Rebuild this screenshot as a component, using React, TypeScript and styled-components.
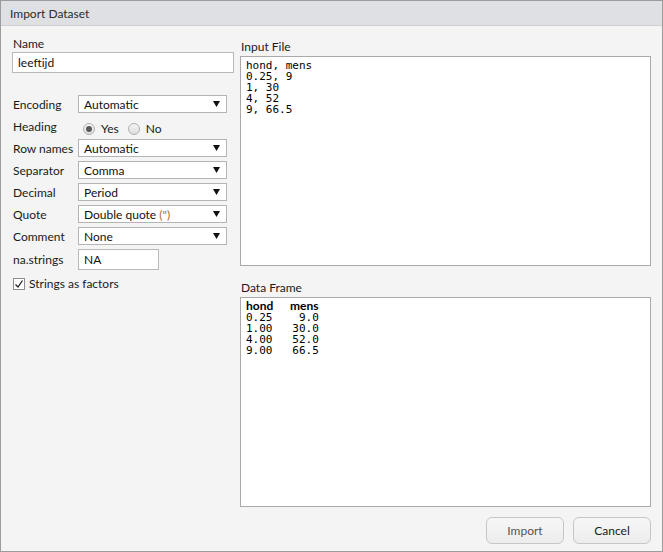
import * as React from "react";
import styled, { createGlobalStyle } from "styled-components";

const GlobalStyle = createGlobalStyle`
    html, body {
        margin: 0;
        padding: 0;
        background: #ffffff;
    }
    body {
        font-family: Lato, "Liberation Sans", sans-serif;
        font-size: 12px;
        color: #1a1a1a;
    }
`

const Window = styled.div`
    width: 663px;
    height: 552px;
    box-sizing: border-box;
    border: 1px solid #9c9c9c;
    background: #f3f4f3;
    display: flex;
    flex-direction: column;
`

const TitleBar = styled.div`
    height: 25px;
    flex: none;
    box-sizing: border-box;
    background: #dfe0e4;
    border-bottom: 1px solid #cfd0d3;
    display: flex;
    align-items: center;
    padding-left: 9px;
    font-size: 12px;
    color: #2b2b2b;
`

const Body = styled.div`
    flex: 1;
    display: flex;
    gap: 6px;
    padding: 11px 11px 0 11px;
`

const LeftColumn = styled.div`
    width: 222px;
    display: flex;
    flex-direction: column;
`

const RightColumn = styled.div`
    flex: 1;
    display: flex;
    flex-direction: column;
    padding-top: 3px;
`

const FieldLabel = styled.div`
    height: 14px;
    line-height: 14px;
    padding-left: 1px;
    margin-bottom: 1px;
    color: #1a1a1a;
`

const TextBox = styled.div<{ $width?: number }>`
    width: ${(p) => (p.$width ? `${p.$width}px` : "auto")};
    height: 21px;
    box-sizing: border-box;
    background: #ffffff;
    border: 1px solid #b9b9b9;
    padding-left: 5px;
    display: flex;
    align-items: center;
    font-size: 12px;
    color: #111;
`

const Form = styled.div`
    margin-top: 22px;
    display: flex;
    flex-direction: column;
    gap: 4px;
`

const FormRow = styled.div<{ $height?: number }>`
    display: grid;
    grid-template-columns: 66px 1fr;
    align-items: center;
    height: ${(p) => p.$height || 18}px;
`

const RowLabel = styled.div`
    padding-left: 1px;
    white-space: nowrap;
    color: #1a1a1a;
`

const SelectBox = styled.div`
    width: 149px;
    height: 18px;
    box-sizing: border-box;
    background: #ffffff;
    border: 1px solid #b4b4b4;
    display: flex;
    align-items: center;
    justify-content: space-between;
    padding: 0 6px 0 5px;
    font-size: 12px;
    color: #111;
`

const Paren = styled.span`
    color: #b0661e;
`

const RadioGroup = styled.div`
    display: flex;
    align-items: center;
    padding-left: 5px;
    padding-top: 2px;
`

const RadioOption = styled.label`
    display: flex;
    align-items: center;
    gap: 6px;
    margin-right: 9px;
    margin-top: 2px;
`

const RadioCircle = styled.span<{ $checked?: boolean }>`
    width: 12px;
    height: 12px;
    box-sizing: border-box;
    border-radius: 50%;
    border: 1px solid #b0b0b0;
    background: linear-gradient(#f6f6f6, #dcdcdc);
    display: flex;
    align-items: center;
    justify-content: center;
    &::after {
        content: "";
        display: ${(p) => (p.$checked ? "block" : "none")};
        width: 6px;
        height: 6px;
        border-radius: 50%;
        background: #5a5a5a;
    }
`

const CheckRow = styled.label`
    margin-top: 6px;
    display: flex;
    align-items: center;
    gap: 4px;
    padding-left: 1px;
`

const CheckBox = styled.span`
    width: 12px;
    height: 12px;
    box-sizing: border-box;
    border: 1px solid #8e8e8e;
    background: #ffffff;
    display: flex;
    align-items: center;
    justify-content: center;
`

const CodePanel = styled.div<{ $padTop?: number }>`
    height: 210px;
    box-sizing: border-box;
    background: #ffffff;
    border: 1px solid #a9a9a9;
    padding: ${(p) => p.$padTop ?? 3}px 5px 3px 5px;
    font-family: "DejaVu Sans Mono", "Liberation Mono", monospace;
    font-size: 11px;
    line-height: 11px;
    color: #000;
    white-space: pre;
`

const PanelLabel = styled(FieldLabel)`
    margin-bottom: 2px;
`

const SecondLabel = styled(PanelLabel)`
    margin-top: 15px;
`

const FrameHeader = styled.div`
    display: flex;
    height: 13px;
    line-height: 13px;
    font-family: Lato, "Liberation Sans", sans-serif;
    font-weight: 700;
    font-size: 12px;
`

const HeaderCell = styled.span<{ $width: number }>`
    width: ${(p) => p.$width}px;
`

const FrameBody = styled.div`
    margin-top: 0;
`

const ButtonBar = styled.div`
    display: flex;
    justify-content: flex-end;
    gap: 9px;
    margin-top: 10px;
`

const Button = styled.button<{ $muted?: boolean }>`
    width: 78px;
    height: 27px;
    border: 1px solid #c6c6c6;
    border-radius: 6px;
    background: linear-gradient(#f7f7f7, #ececec);
    font-family: Lato, "Liberation Sans", sans-serif;
    font-size: 12px;
    color: ${(p) => (p.$muted ? "#555555" : "#1a1a1a")};
    padding: 0;
`

const Arrow = () => (
    <svg width="7" height="6" viewBox="0 0 7 6">
        <polygon points="0,0 7,0 3.5,6" fill="#111" />
    </svg>
)

const Select = ({ children }: { children: React.ReactNode }) => (
    <SelectBox>
        <span>{children}</span>
        <Arrow />
    </SelectBox>
)

const frameText = "0.25    9.0\n1.00   30.0\n4.00   52.0\n9.00   66.5"

export default function App() {
    return (
        <React.Fragment>
            <GlobalStyle />
            <Window>
                <TitleBar>Import Dataset</TitleBar>
                <Body>
                    <LeftColumn>
                        <FieldLabel>Name</FieldLabel>
                        <TextBox>leeftijd</TextBox>
                        <Form>
                            <FormRow>
                                <RowLabel>Encoding</RowLabel>
                                <Select>Automatic</Select>
                            </FormRow>
                            <FormRow>
                                <RowLabel>Heading</RowLabel>
                                <RadioGroup>
                                    <RadioOption>
                                        <RadioCircle $checked />
                                        Yes
                                    </RadioOption>
                                    <RadioOption>
                                        <RadioCircle />
                                        No
                                    </RadioOption>
                                </RadioGroup>
                            </FormRow>
                            <FormRow>
                                <RowLabel>Row names</RowLabel>
                                <Select>Automatic</Select>
                            </FormRow>
                            <FormRow>
                                <RowLabel>Separator</RowLabel>
                                <Select>Comma</Select>
                            </FormRow>
                            <FormRow>
                                <RowLabel>Decimal</RowLabel>
                                <Select>Period</Select>
                            </FormRow>
                            <FormRow>
                                <RowLabel>Quote</RowLabel>
                                <Select>
                                    Double quote <Paren>(")</Paren>
                                </Select>
                            </FormRow>
                            <FormRow>
                                <RowLabel>Comment</RowLabel>
                                <Select>None</Select>
                            </FormRow>
                            <FormRow $height={21}>
                                <RowLabel>na.strings</RowLabel>
                                <TextBox $width={81}>NA</TextBox>
                            </FormRow>
                        </Form>
                        <CheckRow>
                            <CheckBox>
                                <svg width="10" height="10" viewBox="0 0 10 10">
                                    <polyline points="1.5,5.5 4,8 8.5,1.5" fill="none" stroke="#222" strokeWidth="1.3" />
                                </svg>
                            </CheckBox>
                            Strings as factors
                        </CheckRow>
                    </LeftColumn>
                    <RightColumn>
                        <PanelLabel>Input File</PanelLabel>
                        <CodePanel>{"hond, mens\n0.25, 9\n1, 30\n4, 52\n9, 66.5"}</CodePanel>
                        <SecondLabel>Data Frame</SecondLabel>
                        <CodePanel $padTop={1}>
                            <FrameHeader>
                                <HeaderCell $width={44}>hond</HeaderCell>
                                <HeaderCell $width={30}>mens</HeaderCell>
                            </FrameHeader>
                            <FrameBody>{frameText}</FrameBody>
                        </CodePanel>
                        <ButtonBar>
                            <Button $muted>Import</Button>
                            <Button>Cancel</Button>
                        </ButtonBar>
                    </RightColumn>
                </Body>
            </Window>
        </React.Fragment>
    )
}
